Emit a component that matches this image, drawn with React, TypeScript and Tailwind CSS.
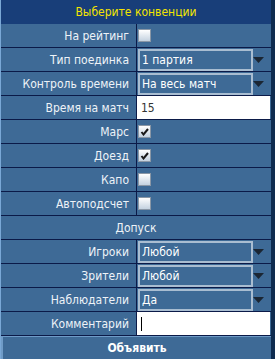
import React from "react";

const F = { fontFamily: '"DejaVu Sans Condensed", "DejaVu Sans", Verdana, sans-serif' };

function Check({ checked }: { checked?: boolean }) {
  return (
    <div className="w-[13px] h-[13px] border border-[#8a97a6] bg-gradient-to-b from-[#ffffff] to-[#c4d2e0] flex items-center justify-center">
      {checked && (
        <svg width="9" height="9" viewBox="0 0 9 9">
          <path d="M1.5 5 L3.5 7.5 L8 2" stroke="#1a1a1a" strokeWidth="2" fill="none" />
        </svg>
      )}
    </div>
  );
}

function Select({ value }: { value: string }) {
  return (
    <div className="flex items-center h-full">
      <div className="w-[115px] h-[22px] border-[2px] border-[#a9bdd1] flex items-center pl-[2px] text-white text-[12px]">
        {value}
      </div>
      <div className="flex-1 flex justify-center">
        <svg width="11" height="6" viewBox="0 0 11 6">
          <path d="M0 0 H11 L5.5 6 Z" fill="#1b2633" />
        </svg>
      </div>
    </div>
  );
}

function Row({ label, children }: { label: string; children: React.ReactNode }) {
  return (
    <div className="grid grid-cols-[136px_1fr] h-[24px] border-b border-[#0b1a48]">
      <div className="border-r border-[#0b1a48] flex items-center justify-end pr-[7px] text-[12px] text-[#eef3f8]">
        {label}
      </div>
      <div className="flex items-center pl-[1px]">{children}</div>
    </div>
  );
}

export default function App() {
  return (
    <div style={F} className="w-[275px] h-[359px] overflow-hidden bg-[#0e2b4f]">
      <div className="w-[271px] h-full border-l border-[#7aa8d6] bg-[#3e6a96]">
        <div className="h-[24px] bg-[#183e79] flex items-center justify-center text-[12px] text-[#f4e400]">
          Выберите конвенции
        </div>
        <Row label="На рейтинг"><Check /></Row>
        <Row label="Тип поединка"><Select value="1 партия" /></Row>
        <Row label="Контроль времени"><Select value="На весь матч" /></Row>
        <Row label="Время на матч">
          <div className="h-full w-full -ml-[1px] bg-white flex items-center pl-[4px] text-[12px] text-[#333]">15</div>
        </Row>
        <Row label="Марс"><Check checked /></Row>
        <Row label="Доезд"><Check checked /></Row>
        <Row label="Капо"><Check /></Row>
        <Row label="Автоподсчет"><Check /></Row>
        <div className="h-[24px] border-b border-[#0b1a48] flex items-center justify-center text-[12px] text-[#eef3f8]">
          Допуск
        </div>
        <Row label="Игроки"><Select value="Любой" /></Row>
        <Row label="Зрители"><Select value="Любой" /></Row>
        <Row label="Наблюдатели"><Select value="Да" /></Row>
        <Row label="Комментарий">
          <div className="h-full w-full -ml-[1px] bg-white flex items-center pl-[4px]">
            <div className="w-[1px] h-[14px] bg-black" />
          </div>
        </Row>
        <div className="h-[23px] border-t border-l-2 border-[#6f9bc7] flex items-center justify-center text-[12px] font-bold text-white">
          Объявить
        </div>
      </div>
    </div>
  );
}
